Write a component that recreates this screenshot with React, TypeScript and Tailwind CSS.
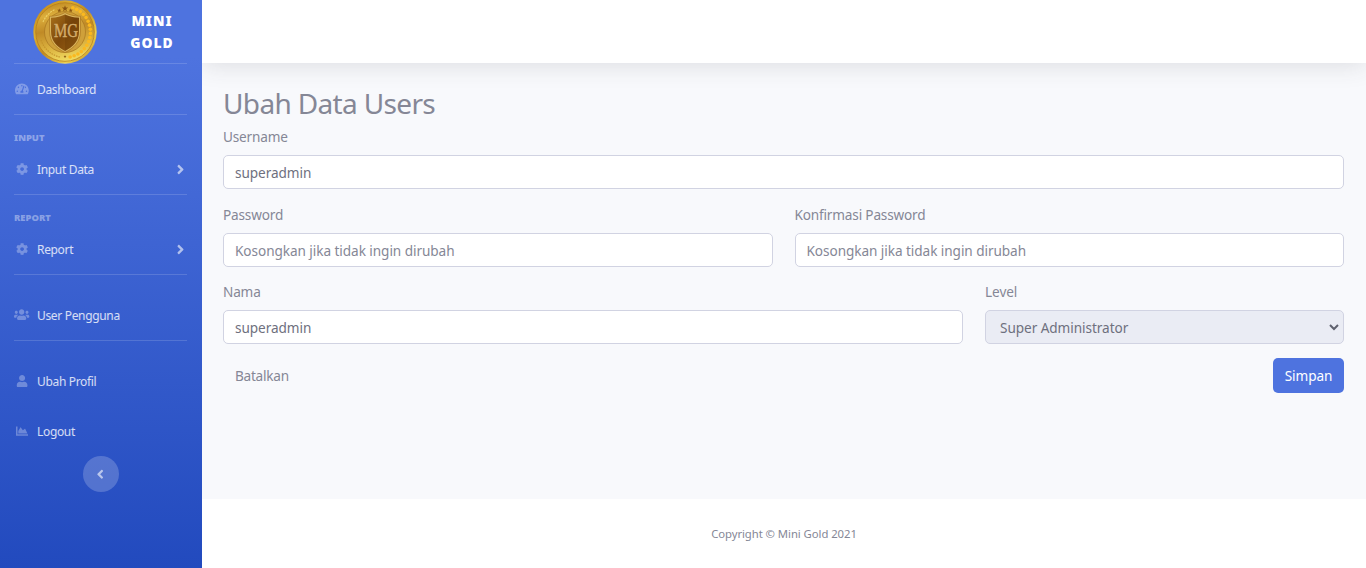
import React from "react";
import {
  FaAngleLeft,
  FaAngleRight,
  FaChartArea,
  FaCog,
  FaTachometerAlt,
  FaUser,
  FaUsers,
} from "react-icons/fa";
import type { IconType } from "react-icons";

const BEADS = Array.from({ length: 17 }, (_, i) => {
  const a = ((-72 + i * 9.4) * Math.PI) / 180;
  return { x: 32 + 25.5 * Math.cos(a), y: 32 + 25.5 * Math.sin(a) };
});

function Star({ x, y, r }: { x: number; y: number; r: number }) {
  const points = Array.from({ length: 10 }, (_, i) => {
    const a = (-90 + i * 36) * (Math.PI / 180);
    const d = i % 2 ? r * 0.42 : r;
    return `${x + d * Math.cos(a)},${y + d * Math.sin(a)}`;
  }).join(" ");
  return <polygon points={points} fill="#8a5510" />;
}

function Coin() {
  return (
    <svg viewBox="0 0 64 64" className="size-16 shrink-0">
      <defs>
        <linearGradient id="rim" x1="0" y1="0" x2="1" y2="1">
          <stop offset="0" stopColor="#b87a12" />
          <stop offset="0.3" stopColor="#dcae30" />
          <stop offset="0.5" stopColor="#c08a20" />
          <stop offset="0.75" stopColor="#ecd050" />
          <stop offset="1" stopColor="#b5780f" />
        </linearGradient>
        <linearGradient id="face" x1="0.3" y1="0" x2="0.5" y2="1">
          <stop offset="0" stopColor="#c08a22" />
          <stop offset="0.2" stopColor="#dcae3c" />
          <stop offset="0.45" stopColor="#c08a26" />
          <stop offset="0.75" stopColor="#dcb340" />
          <stop offset="1" stopColor="#f0dc62" />
        </linearGradient>
        <linearGradient id="shield" x1="0" y1="0" x2="1" y2="1">
          <stop offset="0" stopColor="#a8701a" />
          <stop offset="0.5" stopColor="#7d480b" />
          <stop offset="1" stopColor="#9a6214" />
        </linearGradient>
      </defs>
      <circle cx="32" cy="32" r="31.7" fill="url(#rim)" />
      <circle cx="32" cy="32" r="29.3" fill="url(#face)" stroke="#b37a18" strokeWidth="0.7" />
      <path d="M10 22A24.500 24.500 0 0 1 22 9.500" fill="none" stroke="#edcf66" strokeWidth="1.200" strokeDasharray="2 1" />
      <path d="M8 40A25.500 25.500 0 0 0 27 57" fill="none" stroke="#c4932a" strokeWidth="1.200" strokeDasharray="1.500 1" />
      {BEADS.map((b, i) => (
        <circle key={i} cx={b.x} cy={b.y} r="1.8" fill="#fbb81f" />
      ))}
      <circle cx="32" cy="32" r="20.5" fill="#cfa03a" stroke="#a87520" strokeWidth="0.7" />
      <path d="M32 12.500C28 15 23 16 16.500 16.300V31C16.500 42 23 48 32 52.500C41 48 47.500 42 47.500 31V16.300C41 16 36 15 32 12.500Z" fill="#d9b45c" stroke="#a36b15" strokeWidth="0.6" />
      <path d="M32 14.500C28 16.500 24 17.500 18 17.800V31C18 41.500 24 46.500 32 51C40 46.500 46 41.500 46 31V17.800C40 17.500 36 16.500 32 14.500Z" fill="url(#shield)" />
      <path d="M32 14.500C36 16.500 40 17.500 46 17.800V31C46 41.500 40 46.500 32 51Z" fill="#643807" opacity="0.3" />
      <Star x={32} y={8.500} r={3.300} />
      <Star x={26.300} y={10.500} r={2.200} />
      <Star x={37.700} y={10.500} r={2.200} />
      <Star x={32} y={56.500} r={1.500} />
      <text x="21" y="37" fontFamily="Liberation Serif, serif" fontWeight="400" fontSize="18" textLength="24" lengthAdjust="spacingAndGlyphs" fill="#d4ac6a" stroke="#d4ac6a" strokeWidth="0.4">
        MG
      </text>
    </svg>
  );
}

function NavItem({ icon: Icon, label, arrow, iconSize = "text-[12.2px]" }: { icon: IconType; label: string; arrow?: boolean; iconSize?: string }) {
  return (
    <a href="#" className="flex h-full items-center px-[14px] text-[12px] tracking-[-0.33px] text-white/80">
      <span className={`flex w-4 shrink-0 justify-center text-white/30 ${iconSize}`}>
        <Icon />
      </span>
      <span className="ml-[7px] pt-px">{label}</span>
      {arrow && <FaAngleRight className="mr-[-1px] ml-auto -translate-x-px text-[15px] text-white/60" />}
    </a>
  );
}

function Divider() {
  return <hr className="mr-[15px] ml-[14px] h-px shrink-0 border-0 bg-white/15" />;
}

function Heading({ children }: { children: string }) {
  return (
    <div className="mt-[15px] h-[15px] px-[14px] text-[9.4px] leading-[15px] font-black text-white/40 uppercase">
      {children}
    </div>
  );
}

function Sidebar() {
  return (
    <aside className="flex h-[568px] w-[202px] shrink-0 flex-col bg-[linear-gradient(180deg,#4e73df_10%,#224abe_100%)]">
      <a href="#" className="flex h-[63px] items-center pl-[33px] text-white">
        <Coin />
        <span className="ml-[23px] w-16 text-center text-[13.8px] leading-[22px] font-black tracking-[1px]">
          MINI GOLD
        </span>
      </a>
      <Divider />
      <div className="h-[50px]"><NavItem icon={FaTachometerAlt} label="Dashboard" iconSize="text-[13.8px]" /></div>
      <Divider />
      <Heading>Input</Heading>
      <div className="h-[49px] pb-px"><NavItem icon={FaCog} label="Input Data" arrow /></div>
      <Divider />
      <Heading>Report</Heading>
      <div className="h-[49px] pb-px"><NavItem icon={FaCog} label="Report" arrow /></div>
      <Divider />
      <div className="mt-[15px] h-[50px]"><NavItem icon={FaUsers} label="User Pengguna" iconSize="text-[15.3px]" /></div>
      <Divider />
      <div className="mt-[15px] h-[50px]"><NavItem icon={FaUser} label="Ubah Profil" /></div>
      <div className="h-[50px]"><NavItem icon={FaChartArea} label="Logout" /></div>
      <button className="flex size-9 items-center justify-center self-center rounded-full bg-white/20 pr-[2px] text-[14.4px] text-white/60">
        <FaAngleLeft />
      </button>
    </aside>
  );
}

function Field({ label, value, placeholder, className }: { label: string; value?: string; placeholder?: string; className?: string }) {
  return (
    <label className={className}>
      <span className="mb-[7px] block h-[22px] leading-[22px] tracking-[-0.17px]">{label}</span>
      <input
        defaultValue={value}
        placeholder={placeholder}
        className="block h-[34px] w-full rounded-[5px] border border-[#d1d3e2] bg-white px-[11px] text-[#6e707e] placeholder:text-[#858796]"
      />
    </label>
  );
}

export default function App() {
  return (
    <div className="flex h-[568px] overflow-hidden bg-white font-['Noto_Sans','Open_Sans',sans-serif]">
      <Sidebar />
      <div className="flex min-w-0 flex-1 flex-col overflow-hidden bg-[#f8f9fc] text-[13.6px] tracking-[-0.06px] text-[#858796]">
        <header className="h-[63px] shrink-0 bg-white shadow-[0_2px_25px_0_rgba(58,59,69,0.15)]" />
        <main className="flex-1 pr-[22px] pl-[21px]">
          <h1 className="mt-[21px] h-[42px] text-[28px] leading-[38px] tracking-[-0.65px]">Ubah Data Users</h1>
          <Field label="Username" value="superadmin" />
          <div className="mt-[15px] flex gap-[22px]">
            <Field label="Password" placeholder="Kosongkan jika tidak ingin dirubah" className="flex-1" />
            <Field label="Konfirmasi Password" placeholder="Kosongkan jika tidak ingin dirubah" className="flex-1" />
          </div>
          <div className="mt-[14px] flex gap-[22px]">
            <Field label="Nama" value="superadmin" className="flex-1" />
            <label className="w-[359px]">
              <span className="mb-[7px] block h-[22px] leading-[22px]">Level</span>
              <span className="flex h-[34px] items-center justify-between rounded-[5px] border border-[#d1d3e2] bg-[#eaecf4] pr-[4px] pl-[14px] text-[#6e707e]">
                <span className="pt-[2px]">Super Administrator</span>
                <svg viewBox="0 0 10 7" className="h-[7px] w-[10px]">
                  <path d="M1 1L5 5L9 1" fill="none" stroke="#5f616e" strokeWidth="2" />
                </svg>
              </span>
            </label>
          </div>
          <div className="mt-[14px] flex justify-between">
            <button className="h-[35px] px-3 pt-[2px] tracking-[-0.25px]">Batalkan</button>
            <button className="h-[35px] w-[71px] rounded-[5px] bg-[#4e73df] pt-[2px] text-white">Simpan</button>
          </div>
        </main>
        <footer className="flex h-[69px] shrink-0 items-center justify-center bg-white pt-[2px] text-[11.3px] tracking-[-0.05px]">
          Copyright © Mini Gold 2021
        </footer>
      </div>
    </div>
  );
}
